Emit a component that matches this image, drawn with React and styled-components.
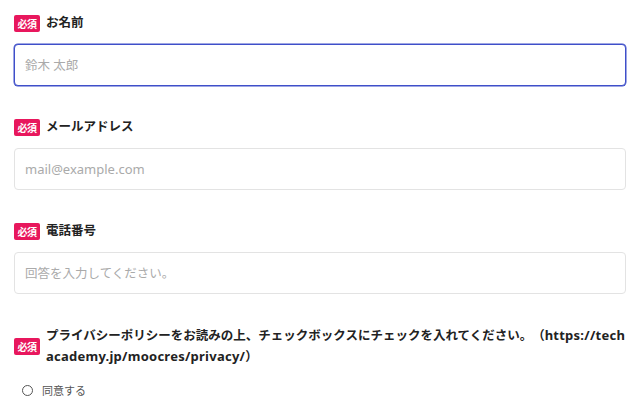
import React from 'react';
import styled, { createGlobalStyle } from 'styled-components';

const GlobalStyle = createGlobalStyle`
    body {
        margin: 0;
        background: #fff;
        font-family: "Noto Sans", "Noto Sans CJK JP", sans-serif;
        color: #222;
    }
`;

const Form = styled.form`
    display: flex;
    flex-direction: column;
    gap: 31px;
    padding: 13px 14px 0 14px;
`;

const Field = styled.div`
    display: flex;
    flex-direction: column;
    gap: ${(props) => props.gap || 11}px;
`;

const LabelRow = styled.div`
    display: flex;
    align-items: center;
    gap: 6px;
`;

const Badge = styled.span`
    flex: none;
    display: inline-flex;
    align-items: center;
    justify-content: center;
    width: 26px;
    height: 17px;
    border-radius: 2px;
    background: #e8175d;
    color: #fff;
    font-family: "Noto Sans CJK JP", sans-serif;
    font-size: 10px;
    font-weight: 700;
    letter-spacing: -0.5px;
`;

const LabelText = styled.span`
    font-family: "Noto Sans", "Noto Sans CJK JP", sans-serif;
    font-size: 12.5px;
    font-weight: 700;
    line-height: 20px;
    color: #222;
    word-break: break-all;
    text-spacing-trim: space-all;
`;

const UrlText = styled.span`
    font-size: 13px;
    letter-spacing: 0.25px;
`;

const Input = styled.input`
    box-sizing: border-box;
    width: 100%;
    height: 42px;
    padding: 0 10px;
    border: 1px solid ${(props) => (props.focused ? '#3f4fc9' : '#e3e3e3')};
    box-shadow: ${(props) => (props.focused ? '0 0 0 0.5px #3f4fc9' : 'none')};
    border-radius: 4px;
    font-family: "Noto Sans", "Noto Sans CJK JP", sans-serif;
    font-size: ${(props) => (props.latin ? 13 : 12.5)}px;
    color: #222;
    outline: none;
    &::placeholder {
        color: #aaa;
    }
`;

const RadioRow = styled.label`
    display: flex;
    align-items: center;
    gap: 9px;
    padding-left: 8px;
    font-size: 11px;
    color: #555;
`;

const RadioCircle = styled.span`
    width: 9px;
    height: 9px;
    border: 1.5px solid #555;
    border-radius: 50%;
`;

const fields = [
    { label: 'お名前', placeholder: '鈴木 太郎', focused: true },
    { label: 'メールアドレス', placeholder: 'mail@example.com', latin: true },
    { label: '電話番号', placeholder: '回答を入力してください。' },
];

const App = () => (
    <>
        <GlobalStyle />
        <Form>
            {fields.map((f) => (
                <Field key={f.label}>
                    <LabelRow>
                        <Badge>必須</Badge>
                        <LabelText>{f.label}</LabelText>
                    </LabelRow>
                    <Input
                        placeholder={f.placeholder}
                        focused={f.focused ? 1 : 0}
                        latin={f.latin ? 1 : 0}
                        readOnly
                    />
                </Field>
            ))}
            <Field gap={15}>
                <LabelRow>
                    <Badge>必須</Badge>
                    <LabelText>
                        プライバシーポリシーをお読みの上、チェックボックスにチェックを入れてください。（
                        <UrlText>https://techacademy.jp/moocres/privacy/</UrlText>）
                    </LabelText>
                </LabelRow>
                <RadioRow>
                    <RadioCircle />
                    同意する
                </RadioRow>
            </Field>
        </Form>
    </>
);

export default App;
